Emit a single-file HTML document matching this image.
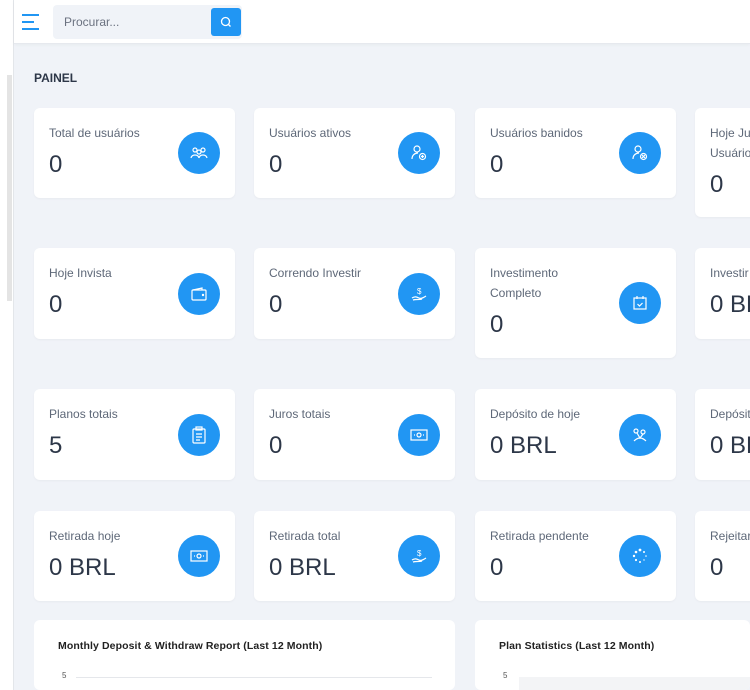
<!DOCTYPE html><html><head><meta charset="utf-8"><style>
*{box-sizing:border-box;margin:0;padding:0}
html,body{width:750px;height:690px;overflow:hidden}
body{background:#f0f3f8;font-family:"Liberation Sans",sans-serif;position:relative}
.side{position:absolute;left:0;top:0;width:14px;height:690px;background:#fff;border-right:1px solid #e3e6ea}
.sb{position:absolute;left:7px;top:75px;width:5px;height:226px;background:#e4e4e4}
.hdr{position:absolute;left:14px;top:0;width:736px;height:44px;background:#fff;border-bottom:1px solid #e6e9ee;box-shadow:0 1px 3px rgba(0,0,0,.04)}
.ham{position:absolute;left:8px;top:14px;width:17px}
.ham i{display:block;height:2px;background:#2196f3;margin-bottom:5px}
.search{position:absolute;left:39px;top:5px;width:189px;height:34px;background:#f0f3f8;border-radius:4px}
.search span{position:absolute;left:11px;top:10px;font-size:12px;color:#6b7280}
.sbtn{position:absolute;right:1px;top:3px;width:30px;height:28px;background:#2196f3;border-radius:3px}
h1{position:absolute;left:34px;top:71px;font-size:12px;font-weight:bold;color:#2d3748}
.card{position:absolute;width:201px;background:#fff;border-radius:6px;padding:15px 15px 0;box-shadow:0 1px 2px rgba(0,0,0,.04);overflow:hidden}
.lb{font-size:12px;color:#5e6878;line-height:20px;width:105px;white-space:normal}
.v{font-size:24px;color:#2d3748;line-height:30px;margin-top:7px}
.ic{position:absolute;left:144px;top:50%;margin-top:-21px;width:42px;height:42px;border-radius:50%;background:#2196f3;display:flex;align-items:center;justify-content:center}
.ch{position:absolute;background:#fff;border-radius:6px;top:620px;height:70px;overflow:hidden}
.ch b{position:absolute;left:24px;top:20px;font-size:10.5px;color:#222;letter-spacing:.1px}
.ch em{position:absolute;left:28px;top:51px;font-size:8px;color:#555;font-style:normal}
.ch s{position:absolute;left:42px;top:57px;height:1px;background:#e5e7eb;text-decoration:none}
</style></head><body>
<div class="side"><div class="sb"></div></div>
<div class="hdr">
<div class="ham"><i></i><i style="width:12px"></i><i></i></div>
<div class="search"><span>Procurar...</span><div class="sbtn"><svg width="30" height="28" viewBox="0 0 30 28"><circle cx="14.5" cy="13.5" r="4" fill="none" stroke="#fff" stroke-width="1.3"/><path d="M17.5 16.5l2 2" stroke="#fff" stroke-width="1.3"/></svg></div></div>
</div>
<h1>PAINEL</h1>

<div class="card" style="left:34px;top:108px;height:90px"><div class="lb" style="width:130px">Total de usuários</div><div class="v">0</div><div class="ic"><svg width="18" height="14" viewBox="0 0 18 14" fill="none" stroke="#fff" stroke-width="1.2"><circle cx="5" cy="4" r="2"/><circle cx="13" cy="4" r="2"/><circle cx="9" cy="6" r="2"/><path d="M1 12c1-4 7-4 8 0M9 12c1-4 7-4 8 0"/></svg></div></div>
<div class="card" style="left:254px;top:108px;height:90px"><div class="lb">Usuários ativos</div><div class="v">0</div><div class="ic"><svg width="18" height="18" viewBox="0 0 18 18" fill="none" stroke="#fff" stroke-width="1.2"><circle cx="7" cy="5" r="3"/><path d="M2 15c0-4 3-6 6-6"/><circle cx="12.5" cy="12.5" r="3"/><path d="M11 12.5h3M12.5 11v3"/></svg></div></div>
<div class="card" style="left:475px;top:108px;height:90px"><div class="lb">Usuários banidos</div><div class="v">0</div><div class="ic"><svg width="18" height="18" viewBox="0 0 18 18" fill="none" stroke="#fff" stroke-width="1.2"><circle cx="7" cy="5" r="3"/><path d="M2 15c0-4 3-6 6-6"/><circle cx="12.5" cy="12.5" r="3"/><path d="M11 11l3 3M14 11l-3 3"/></svg></div></div>
<div class="card" style="left:695px;top:108px;height:109px"><div class="lb">Hoje Juros Usuários</div><div class="v">0</div></div>

<div class="card" style="left:34px;top:248px;height:91px"><div class="lb">Hoje Invista</div><div class="v">0</div><div class="ic"><svg width="16" height="14" viewBox="0 0 16 14" fill="none" stroke="#fff" stroke-width="1.2"><rect x="1" y="3" width="14" height="10" rx="1"/><path d="M2 3l9-2v2"/><circle cx="12" cy="8" r=".6" fill="#fff"/></svg></div></div>
<div class="card" style="left:254px;top:248px;height:91px"><div class="lb">Correndo Investir</div><div class="v">0</div><div class="ic"><svg width="18" height="18" viewBox="0 0 18 18" fill="none" stroke="#fff" stroke-width="1.2"><text x="7" y="9" font-size="8" fill="#fff" stroke="none" font-family="Liberation Sans">$</text><path d="M2 13c3-2 5-1 7 0s4 0 7-2M3 15c3-1 6 0 9-1"/></svg></div></div>
<div class="card" style="left:475px;top:248px;height:110px"><div class="lb" style="width:90px">Investimento Completo</div><div class="v">0</div><div class="ic"><svg width="16" height="16" viewBox="0 0 16 16" fill="none" stroke="#fff" stroke-width="1.2"><rect x="2" y="3" width="12" height="11"/><path d="M5 1v3M11 1v3M5.5 9l2 2 3-3"/></svg></div></div>
<div class="card" style="left:695px;top:248px;height:91px"><div class="lb">Investir Total</div><div class="v">0 BRL</div></div>

<div class="card" style="left:34px;top:389px;height:91px"><div class="lb">Planos totais</div><div class="v">5</div><div class="ic"><svg width="14" height="18" viewBox="0 0 14 18" fill="none" stroke="#fff" stroke-width="1.2"><rect x="1" y="3" width="12" height="14" rx="1"/><rect x="4" y="1" width="6" height="3"/><path d="M4 8h6M4 11h6M4 14h4"/></svg></div></div>
<div class="card" style="left:254px;top:389px;height:91px"><div class="lb">Juros totais</div><div class="v">0</div><div class="ic"><svg width="18" height="12" viewBox="0 0 18 12" fill="none" stroke="#fff" stroke-width="1.2"><rect x="1" y="1" width="16" height="10"/><circle cx="9" cy="6" r="2"/><path d="M4 6h1M13 6h1"/></svg></div></div>
<div class="card" style="left:475px;top:389px;height:91px"><div class="lb">Depósito de hoje</div><div class="v">0 BRL</div><div class="ic"><svg width="18" height="16" viewBox="0 0 18 16" fill="none" stroke="#fff" stroke-width="1.2"><circle cx="5" cy="4" r="2"/><circle cx="12" cy="5" r="2"/><path d="M6 6l3 5 3-4M3 14c2-2 4-3 6-3s4 1 6 3"/></svg></div></div>
<div class="card" style="left:695px;top:389px;height:91px"><div class="lb">Depósito total</div><div class="v">0 BRL</div></div>

<div class="card" style="left:34px;top:511px;height:90px"><div class="lb">Retirada hoje</div><div class="v">0 BRL</div><div class="ic"><svg width="18" height="12" viewBox="0 0 18 12" fill="none" stroke="#fff" stroke-width="1.2"><rect x="1" y="1" width="16" height="10"/><circle cx="9" cy="6" r="2"/><path d="M4 6h1M13 6h1"/></svg></div></div>
<div class="card" style="left:254px;top:511px;height:90px"><div class="lb">Retirada total</div><div class="v">0 BRL</div><div class="ic"><svg width="18" height="18" viewBox="0 0 18 18" fill="none" stroke="#fff" stroke-width="1.2"><text x="7" y="9" font-size="8" fill="#fff" stroke="none" font-family="Liberation Sans">$</text><path d="M2 13c3-2 5-1 7 0s4 0 7-2M3 15c3-1 6 0 9-1"/></svg></div></div>
<div class="card" style="left:475px;top:511px;height:90px"><div class="lb" style="width:120px">Retirada pendente</div><div class="v">0</div><div class="ic"><svg width="16" height="16" viewBox="0 0 16 16" fill="#fff"><circle cx="8" cy="2" r="1.4"/><circle cx="12" cy="4" r="1"/><circle cx="14" cy="8" r=".8"/><circle cx="12" cy="12" r=".7"/><circle cx="8" cy="14" r="1"/><circle cx="4" cy="12" r="1.1"/><circle cx="2" cy="8" r="1.2"/><circle cx="4" cy="4" r="1.3"/></svg></div></div>
<div class="card" style="left:695px;top:511px;height:90px"><div class="lb">Rejeitar retirada</div><div class="v">0</div></div>

<div class="ch" style="left:34px;width:421px"><b>Monthly Deposit &amp; Withdraw Report (Last 12 Month)</b><em>5</em><s style="width:356px"></s></div>
<div class="ch" style="left:475px;width:275px"><b>Plan Statistics (Last 12 Month)</b><em>5</em><s style="left:44px;width:240px;height:14px;background:#f3f4f6"></s></div>
</body></html>
